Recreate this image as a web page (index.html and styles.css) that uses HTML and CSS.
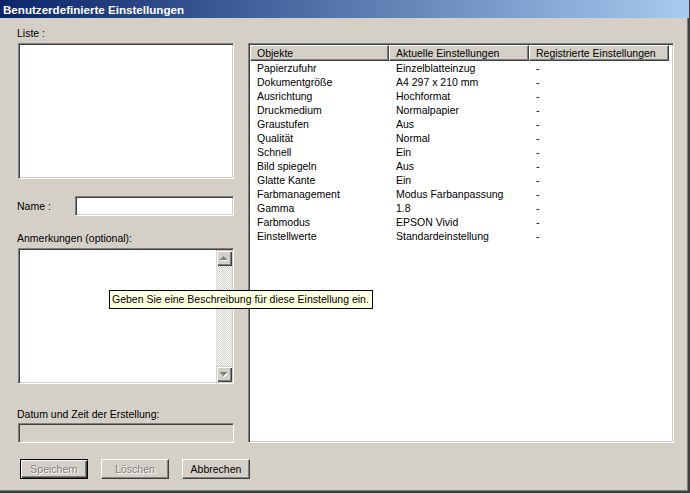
FILE: index.html
```html
<!DOCTYPE html>
<html lang="de">
<head>
<meta charset="utf-8">
<title>Benutzerdefinierte Einstellungen</title>
<link rel="stylesheet" href="styles.css">
</head>
<body>
<div class="window">
  <div class="titlebar">Benutzerdefinierte Einstellungen</div>
  <div class="client">
    <div class="left">
      <div class="lbl lbl-liste">Liste :</div>
      <div class="field listbox"></div>
      <div class="name-row">
        <span class="lbl name-lbl">Name :</span>
        <div class="field namebox"></div>
      </div>
      <div class="lbl lbl-notes">Anmerkungen (optional):</div>
      <div class="field notes">
        <div class="vscroll">
          <div class="sbtn">
            <svg width="16" height="16" viewBox="0 0 16 16"><path transform="translate(1 1)" fill="#fff" d="M7 6h1v1h1v1h1v1h1v1H4V9h1V8h1V7h1z"/><path fill="#808080" d="M7 6h1v1h1v1h1v1h1v1H4V9h1V8h1V7h1z"/></svg>
          </div>
          <div class="track"></div>
          <div class="sbtn">
            <svg width="16" height="16" viewBox="0 0 16 16"><path transform="translate(1 1)" fill="#fff" d="M4 6h7v1h-1v1h-1v1h-1v1H7V9H6V8H5V7H4z"/><path fill="#808080" d="M4 6h7v1h-1v1h-1v1h-1v1H7V9H6V8H5V7H4z"/></svg>
          </div>
        </div>
      </div>
      <div class="lbl lbl-date">Datum und Zeit der Erstellung:</div>
      <div class="field datebox"></div>
      <div class="buttons">
        <button class="btn default" disabled>Speichern</button>
        <button class="btn" disabled>Löschen</button>
        <button class="btn">Abbrechen</button>
      </div>
    </div>
    <div class="listview">
      <div class="lv-head">
        <div class="hcell c1">Objekte</div>
        <div class="hcell c2">Aktuelle Einstellungen</div>
        <div class="hcell c3">Registrierte Einstellungen</div>
      </div>
      <div class="lv-row"><span class="c1">Papierzufuhr</span><span class="c2">Einzelblatteinzug</span><span class="c3">-</span></div>
      <div class="lv-row"><span class="c1">Dokumentgröße</span><span class="c2">A4 297 x 210 mm</span><span class="c3">-</span></div>
      <div class="lv-row"><span class="c1">Ausrichtung</span><span class="c2">Hochformat</span><span class="c3">-</span></div>
      <div class="lv-row"><span class="c1">Druckmedium</span><span class="c2">Normalpapier</span><span class="c3">-</span></div>
      <div class="lv-row"><span class="c1">Graustufen</span><span class="c2">Aus</span><span class="c3">-</span></div>
      <div class="lv-row"><span class="c1">Qualität</span><span class="c2">Normal</span><span class="c3">-</span></div>
      <div class="lv-row"><span class="c1">Schnell</span><span class="c2">Ein</span><span class="c3">-</span></div>
      <div class="lv-row"><span class="c1">Bild spiegeln</span><span class="c2">Aus</span><span class="c3">-</span></div>
      <div class="lv-row"><span class="c1">Glatte Kante</span><span class="c2">Ein</span><span class="c3">-</span></div>
      <div class="lv-row"><span class="c1">Farbmanagement</span><span class="c2">Modus Farbanpassung</span><span class="c3">-</span></div>
      <div class="lv-row"><span class="c1">Gamma</span><span class="c2">1.8</span><span class="c3">-</span></div>
      <div class="lv-row"><span class="c1">Farbmodus</span><span class="c2">EPSON Vivid</span><span class="c3">-</span></div>
      <div class="lv-row"><span class="c1">Einstellwerte</span><span class="c2">Standardeinstellung</span><span class="c3">-</span></div>
    </div>
  </div>
  <div class="tooltip">Geben Sie eine Beschreibung für diese Einstellung ein.</div>
</div>
</body>
</html>
```

FILE: styles.css
```css
html, body {
  margin: 0;
  padding: 0;
  background: #d4d0c8;
}

.window {
  position: relative;
  width: 690px;
  height: 493px;
  box-sizing: border-box;
  background: #d4d0c8;
  font-family: "Liberation Sans", Arial, sans-serif;
  font-size: 10.5px;
  color: #000;
  box-shadow: inset -2px -2px 0 #404040, inset -3px -3px 0 #808080;
  overflow: hidden;
}

.titlebar {
  height: 18px;
  line-height: 19px;
  padding-left: 3px;
  margin-right: 1px;
  background: linear-gradient(to right, #0a246a, #a6caf0);
  color: #fff;
  font-weight: bold;
  font-size: 11.6px;
  white-space: nowrap;
}

.client {
  display: flex;
  gap: 14px;
  padding-left: 17px;
}

.left {
  width: 217px;
  display: flex;
  flex-direction: column;
}

.lbl {
  height: 14px;
  line-height: 14px;
  white-space: nowrap;
}

.lbl-liste { margin-top: 8px; }
.lbl-notes { margin-top: 15px; }
.lbl-date { margin-top: 23px; }

.field {
  box-sizing: border-box;
  width: 216px;
  margin-left: 1px;
  background: #fff;
  border: 1px solid;
  border-color: #808080 #fff #fff #808080;
  box-shadow: inset 1px 1px 0 #404040, inset -1px -1px 0 #d4d0c8;
}

.listbox {
  margin-top: 3px;
  height: 136px;
}

.name-row {
  margin-top: 17px;
  height: 20px;
  display: flex;
  align-items: center;
}

.name-lbl { width: 58px; }

.namebox {
  width: 159px;
  height: 20px;
  margin-left: 0;
}

.notes {
  margin-top: 3px;
  height: 136px;
  padding: 1px;
  display: flex;
  justify-content: flex-end;
}

.vscroll {
  width: 16px;
  display: flex;
  flex-direction: column;
}

.sbtn {
  height: 16px;
  background: #d4d0c8;
  box-shadow: inset 1px 1px 0 #d4d0c8, inset 2px 2px 0 #fff, inset -1px -1px 0 #404040, inset -2px -2px 0 #808080;
}

.sbtn svg { display: block; }

.track {
  flex: 1;
  background: repeating-conic-gradient(#fff 0 25%, #d4d0c8 0 50%) 0 0 / 2px 2px;
}

.datebox {
  margin-top: 2px;
  height: 20px;
  background: #d4d0c8;
}

.buttons {
  margin-top: 16px;
  padding-left: 3px;
  display: flex;
  gap: 13px;
  height: 20px;
}

.btn {
  flex: none;
  width: 68px;
  height: 20px;
  box-sizing: border-box;
  padding: 0;
  margin: 0;
  font: inherit;
  color: #000;
  line-height: 17px;
  text-align: center;
  background: #d4d0c8;
  border: 1px solid;
  border-color: #fff #404040 #404040 #fff;
  border-radius: 0;
  box-shadow: inset -1px -1px 0 #808080;
}

.btn.default {
  border-color: #000;
  box-shadow: inset 1px 1px 0 #fff, inset -1px -1px 0 #404040, inset -2px -2px 0 #808080;
}

.btn:disabled {
  color: #808080;
  text-shadow: 1px 1px 0 #fff;
}

.listview {
  margin-top: 25px;
  width: 426px;
  height: 400px;
  box-sizing: border-box;
  padding: 1px;
  background: #fff;
  border: 1px solid;
  border-color: #808080 #fff #fff #808080;
  box-shadow: inset 1px 1px 0 #404040, inset -1px -1px 0 #d4d0c8;
}

.lv-head {
  display: flex;
  height: 16px;
}

.hcell {
  box-sizing: border-box;
  height: 16px;
  line-height: 14px;
  padding-left: 6px;
  background: #d4d0c8;
  border-top: 1px solid #fff;
  border-left: 1px solid #fff;
  border-right: 1px solid #404040;
  border-bottom: 1px solid #404040;
  box-shadow: inset -1px -1px 0 #808080;
  white-space: nowrap;
}

.lv-row {
  display: flex;
  height: 14px;
  line-height: 14px;
  white-space: nowrap;
}

.lv-row span {
  box-sizing: border-box;
  padding-left: 7px;
}

.c1 { width: 139px; flex: none; }
.c2 { width: 140px; flex: none; }
.c3 { width: 140px; flex: none; }

.tooltip {
  position: absolute;
  left: 109px;
  top: 290px;
  width: 264px;
  height: 19px;
  box-sizing: border-box;
  padding: 0 2px;
  line-height: 17px;
  background: #ffffe1;
  border: 1px solid #000;
  white-space: nowrap;
}
```
